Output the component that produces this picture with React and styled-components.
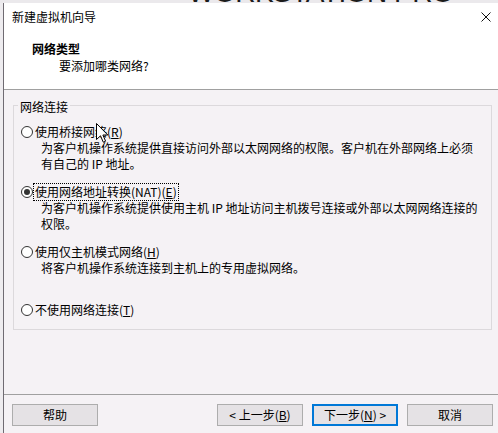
import { createGlobalStyle, styled } from "styled-components";

const GlobalStyle = createGlobalStyle`
  *, *::before, *::after {
    box-sizing: border-box;
  }
  html, body {
    margin: 0;
    padding: 0;
    background: #eeecef;
  }
  body {
    font-family: "Noto Sans CJK SC", "Liberation Sans", sans-serif;
    font-size: 12px;
    color: #000;
  }
`;

const options = [
  {
    label: "使用桥接网络",
    key: "R",
    height: 60,
    lines: [
      "为客户机操作系统提供直接访问外部以太网网络的权限。客户机在外部网络上必须",
      "有自己的 IP 地址。",
    ],
  },
  {
    label: "使用网络地址转换(NAT)",
    key: "E",
    height: 60,
    checked: true,
    lines: [
      "为客户机操作系统提供使用主机 IP 地址访问主机拨号连接或外部以太网网络连接的",
      "权限。",
    ],
  },
  {
    label: "使用仅主机模式网络",
    key: "H",
    height: 58,
    lines: ["将客户机操作系统连接到主机上的专用虚拟网络。"],
  },
  { label: "不使用网络连接", key: "T", lines: [] },
];

function Mnemonic({ text, letter }) {
  return (
    <>
      {text}(<u>{letter}</u>)
    </>
  );
}

export default function App() {
  return (
    <Screen>
      <GlobalStyle />
      <Backdrop>
        <BrandText>WORKSTATION PRO</BrandText>
      </Backdrop>
      <Desktop>
        <Dialog>
          <TitleBar>
            <span>新建虚拟机向导</span>
            <svg width="10" height="10" viewBox="0 0 10 10">
              <path d="M0.5 0.5 L9.5 9.5 M9.5 0.5 L0.5 9.5" stroke="#111" strokeWidth="1" />
            </svg>
          </TitleBar>

          <Header>
            <HeaderTitle>网络类型</HeaderTitle>
            <HeaderSub>要添加哪类网络?</HeaderSub>
          </Header>

          <Body>
            <GroupBox>
              <Legend>网络连接</Legend>
              <OptionList>
                {options.map((opt) => (
                  <Option key={opt.key} $height={opt.height}>
                    <OptionRow>
                      <Radio $checked={opt.checked} />
                      <RadioLabel $focused={opt.checked}>
                        <Mnemonic text={opt.label} letter={opt.key} />
                      </RadioLabel>
                    </OptionRow>
                    {opt.lines.map((line) => (
                      <Desc key={line}>{line}</Desc>
                    ))}
                  </Option>
                ))}
              </OptionList>
            </GroupBox>
          </Body>

          <Footer>
            <Button>帮助</Button>
            <ButtonGroup>
              <Button>
                &lt; 上一步(<u>B</u>)
              </Button>
              <Button $primary>
                下一步(<u>N</u>) &gt;
              </Button>
              <Button>取消</Button>
            </ButtonGroup>
          </Footer>
        </Dialog>
      </Desktop>

      <Cursor width="13" height="20" viewBox="0 0 13 20">
        <path
          d="M0.5 0.5 L0.5 16.5 L4.5 12.8 L7.3 19.2 L9.6 18.2 L6.9 12 L11.8 12 Z"
          fill="#fff"
          stroke="#000"
          strokeWidth="1"
          strokeLinejoin="miter"
        />
      </Cursor>
    </Screen>
  );
}

const Screen = styled.div`
  position: relative;
  width: 498px;
  height: 433px;
  overflow: hidden;
  display: flex;
  flex-direction: column;
  background: #eeecef;
`;

const Backdrop = styled.div`
  height: 3px;
  flex: none;
  overflow: hidden;
  display: flex;
  align-items: flex-end;
  padding-left: 188px;
  background: #ebe9ec;
`;

const BrandText = styled.span`
  font: 28px/28px "Liberation Sans", sans-serif;
  color: #1b1b1b;
  letter-spacing: -0.5px;
  margin-bottom: -4px;
  white-space: nowrap;
`;

const Desktop = styled.div`
  flex: 1;
  display: flex;
  min-height: 0;
`;

const Dialog = styled.div`
  flex: 1;
  margin-left: 3px;
  border-left: 1px solid #6f6b72;
  background: #f5f2f5;
  display: flex;
  flex-direction: column;
  min-width: 0;
`;

const TitleBar = styled.div`
  height: 28px;
  flex: none;
  background: #fff;
  display: flex;
  align-items: center;
  justify-content: space-between;
  padding: 0 7px 0 8px;
  line-height: 16px;
`;

const Header = styled.div`
  height: 59px;
  flex: none;
  background: #fff;
  border-bottom: 1px solid #a0a0a0;
  padding: 10px 0 0 28px;
`;

const HeaderTitle = styled.div`
  font-weight: 700;
  line-height: 16px;
`;

const HeaderSub = styled.div`
  margin: 1px 0 0 27px;
  line-height: 16px;
`;

const Body = styled.div`
  height: 304px;
  flex: none;
  padding: 6px 0 0 9px;
`;

const GroupBox = styled.fieldset`
  margin: 0;
  width: 479px;
  border: 1px solid #dcd9dc;
  padding: 0 0 11px 4px;
`;

const Legend = styled.legend`
  padding: 3px 2px 0;
  line-height: 16px;
`;

const OptionList = styled.div`
  padding: 9px 0 0 3px;
  display: flex;
  flex-direction: column;
`;

const Option = styled.div`
  height: ${(p) => (p.$height ? `${p.$height}px` : "auto")};
`;

const OptionRow = styled.div`
  display: flex;
  align-items: center;
  height: 16px;
`;

const Radio = styled.span`
  position: relative;
  width: 12px;
  height: 12px;
  border: 1px solid #333;
  border-radius: 50%;
  background: #fff;
  flex: none;

  &::after {
    content: "";
    display: ${(p) => (p.$checked ? "block" : "none")};
    position: absolute;
    left: 2px;
    top: 2px;
    width: 6px;
    height: 6px;
    border-radius: 50%;
    background: #333;
  }
`;

const RadioLabel = styled.span`
  padding: 0 1px;
  line-height: 16px;
  border: 1px dotted ${(p) => (p.$focused ? "#000" : "transparent")};
  white-space: nowrap;
`;

const Desc = styled.div`
  padding-left: 20px;
  line-height: 15.5px;
  white-space: nowrap;
`;

const Footer = styled.div`
  flex: 1;
  border-top: 1px solid #a0a0a0;
  display: flex;
  align-items: flex-start;
  padding: 9px 5px 0 8px;
`;

const ButtonGroup = styled.div`
  margin-left: auto;
  display: flex;
  gap: 9px;
`;

const Button = styled.button`
  width: 86px;
  height: 22px;
  margin: 0;
  padding: 0;
  font: inherit;
  color: #000;
  line-height: 16px;
  background: #e5e2e5;
  border: ${(p) => (p.$primary ? "2px solid #0078d7" : "1px solid #adadad")};
`;

const Cursor = styled.svg`
  position: absolute;
  left: 96px;
  top: 123px;
`;
